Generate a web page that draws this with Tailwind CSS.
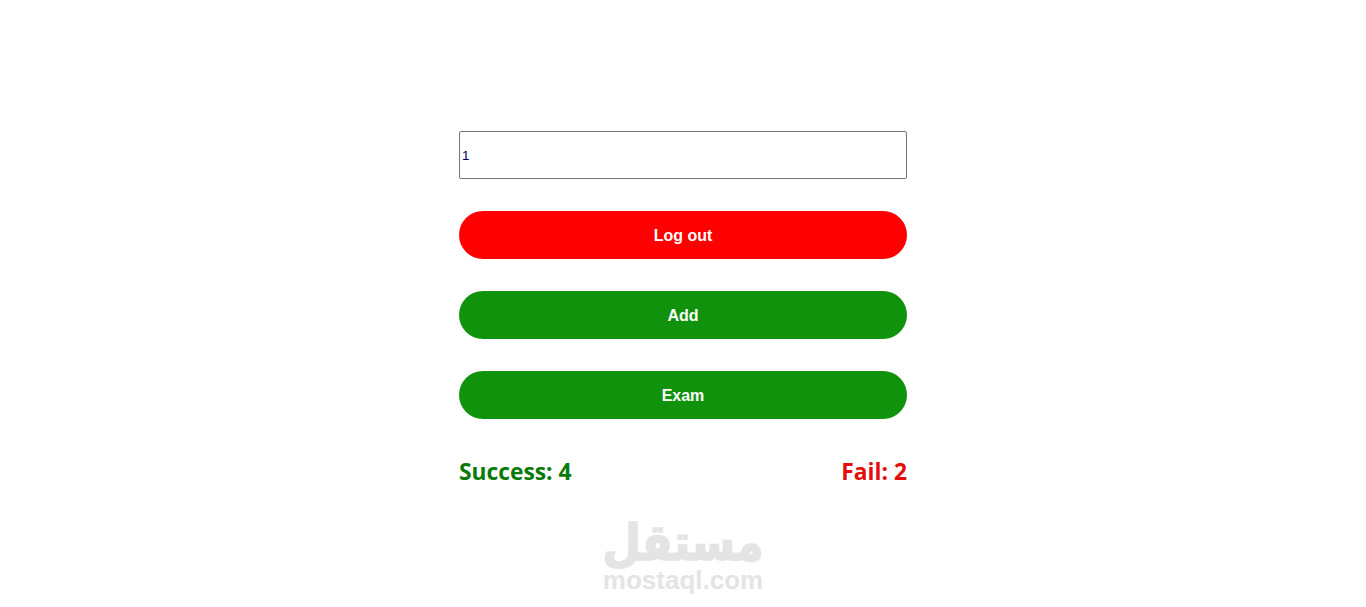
<!DOCTYPE html>
<html lang="en">
<head>
    <meta charset="UTF-8">
    <title>Dashboard</title>
    <script src="https://cdn.jsdelivr.net/npm/@tailwindcss/browser@4"></script>
</head>
<body class="h-[607px] overflow-hidden bg-white font-['Liberation_Sans',sans-serif]">
    <main class="w-[448px] mx-auto pt-[131px] flex flex-col gap-8">
        <input type="text" value="1" class="h-12 w-full border border-[#767676] rounded-[2px] px-[2px] text-[13.33px] text-[#00005a] outline-none">
        <button class="h-12 w-full rounded-full bg-[#ff0000] text-white font-bold text-base pt-px">Log out</button>
        <button class="h-12 w-full rounded-full bg-[#10920c] text-white font-bold text-base pt-px">Add</button>
        <button class="h-12 w-full rounded-full bg-[#10920c] text-white font-bold text-base pt-px">Exam</button>
    </main>
    <div class="w-[448px] mx-auto mt-[36px] flex justify-between font-['Open_Sans',sans-serif] font-bold text-[22.8px] leading-[34px]">
        <span class="text-[#087a08]">Success: 4</span>
        <span class="text-[#e60c0c]">Fail: 2</span>
    </div>
    <!-- watermark -->
    <div class="mt-[34px] flex flex-col items-center text-[#e4e4e4] font-bold">
        <span dir="rtl" class="font-['DejaVu_Sans',sans-serif] text-[44px] leading-[40px] scale-y-[1.15] [-webkit-text-stroke:1.5px_#e4e4e4]">مستقل</span>
        <span class="text-[26px] leading-[26px] mt-[4px]">mostaql.com</span>
    </div>
</body>
</html>
